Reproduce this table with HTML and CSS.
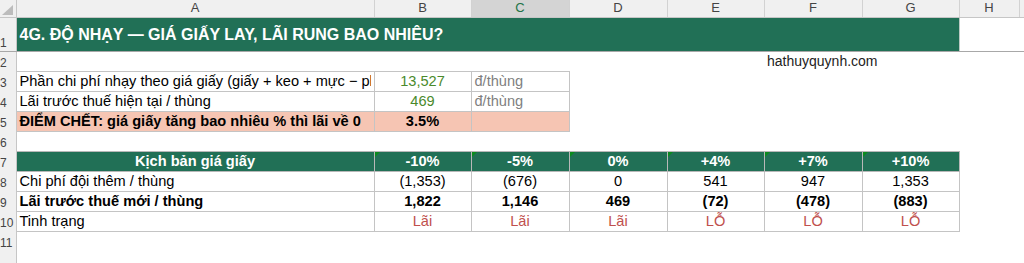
FILE: index.html
```html
<!DOCTYPE html>
<html lang="vi">
<head>
<meta charset="utf-8">
<title>4G. Độ nhạy</title>
<link rel="stylesheet" href="styles.css">
</head>
<body>
<table class="sheet">
  <colgroup>
    <col class="c-rh"><col class="c-a"><col class="c-b"><col class="c-c"><col class="c-d"><col class="c-e"><col class="c-f"><col class="c-g"><col class="c-h"><col class="c-i">
  </colgroup>
  <tr class="hdr">
    <td class="corner"><span class="corner-tri"></span></td>
    <td>A</td><td>B</td><td class="sel">C</td><td>D</td><td>E</td><td>F</td><td>G</td><td>H</td><td></td>
  </tr>
  <tr class="r1">
    <td class="rh">1</td>
    <td class="title" colspan="7">4G. ĐỘ NHẠY — GIÁ GIẤY LAY, LÃI RUNG BAO NHIÊU?</td>
    <td></td><td></td>
  </tr>
  <tr>
    <td class="rh">2</td>
    <td></td><td></td><td></td><td></td><td></td><td class="site">hathuyquynh.com</td><td></td><td></td><td></td>
  </tr>
  <tr>
    <td class="rh">3</td>
    <td class="bx clip"><span class="cut">Phần chi phí nhạy theo giá giấy (giấy + keo + mực − ph</span></td>
    <td class="bx num green">13,527</td>
    <td class="bx unit">đ/thùng</td>
    <td></td><td></td><td></td><td></td><td></td><td></td>
  </tr>
  <tr>
    <td class="rh">4</td>
    <td class="bx">Lãi trước thuế hiện tại / thùng</td>
    <td class="bx num green">469</td>
    <td class="bx unit">đ/thùng</td>
    <td></td><td></td><td></td><td></td><td></td><td></td>
  </tr>
  <tr>
    <td class="rh">5</td>
    <td class="bx hot">ĐIỂM CHẾT: giá giấy tăng bao nhiêu % thì lãi về 0</td>
    <td class="bx hot num">3.5%</td>
    <td class="bx hot"></td>
    <td></td><td></td><td></td><td></td><td></td><td></td>
  </tr>
  <tr>
    <td class="rh">6</td>
    <td></td><td></td><td></td><td></td><td></td><td></td><td></td><td></td><td></td>
  </tr>
  <tr>
    <td class="rh">7</td>
    <td class="kh">Kịch bản giá giấy</td>
    <td class="kh tri">-10%</td>
    <td class="kh tri">-5%</td>
    <td class="kh tri">0%</td>
    <td class="kh tri">+4%</td>
    <td class="kh tri">+7%</td>
    <td class="kh tri">+10%</td>
    <td></td><td></td>
  </tr>
  <tr>
    <td class="rh">8</td>
    <td class="bd lbl">Chi phí đội thêm / thùng</td>
    <td class="bd">(1,353)</td>
    <td class="bd">(676)</td>
    <td class="bd">0</td>
    <td class="bd">541</td>
    <td class="bd">947</td>
    <td class="bd">1,353</td>
    <td></td><td></td>
  </tr>
  <tr class="bold">
    <td class="rh">9</td>
    <td class="bd lbl">Lãi trước thuế mới / thùng</td>
    <td class="bd">1,822</td>
    <td class="bd">1,146</td>
    <td class="bd">469</td>
    <td class="bd">(72)</td>
    <td class="bd">(478)</td>
    <td class="bd">(883)</td>
    <td></td><td></td>
  </tr>
  <tr>
    <td class="rh">10</td>
    <td class="bd lbl">Tinh trạng</td>
    <td class="bd st">Lãi</td>
    <td class="bd st">Lãi</td>
    <td class="bd st">Lãi</td>
    <td class="bd st">LỖ</td>
    <td class="bd st">LỖ</td>
    <td class="bd st">LỖ</td>
    <td></td><td></td>
  </tr>
  <tr>
    <td class="rh">11</td>
    <td></td><td></td><td></td><td></td><td></td><td></td><td></td><td></td><td></td>
  </tr>
  <tr>
    <td class="rh"></td>
    <td></td><td></td><td></td><td></td><td></td><td></td><td></td><td></td><td></td>
  </tr>
</table>
</body>
</html>
```
FILE: styles.css
```css
html, body {
  margin: 0;
  padding: 0;
  background: #ffffff;
  overflow: hidden;
}

body {
  font-family: "Liberation Sans", Arial, sans-serif;
  font-size: 14.6px;
  color: #000000;
}

.sheet {
  border-collapse: collapse;
  table-layout: fixed;
  width: 1024px;
}

.c-rh { width: 16px; }
.c-a { width: 358px; }
.c-b { width: 97px; }
.c-c { width: 98px; }
.c-d { width: 98px; }
.c-e { width: 97px; }
.c-f { width: 98px; }
.c-g { width: 97px; }
.c-h { width: 60px; }
.c-i { width: 5px; }

.sheet td {
  height: 20px;
  padding: 0 3px 1px 3px;
  line-height: 17px;
  vertical-align: bottom;
  white-space: nowrap;
  overflow: visible;
  box-sizing: border-box;
}

/* column header */
.hdr td {
  height: 17px;
  padding: 0;
  line-height: 16px;
  vertical-align: middle;
  background: #f0f0f0;
  border-right: 1px solid #d2d2d2;
  border-bottom: 1px solid #c6c6c6;
  text-align: center;
  font-size: 13px;
  color: #444444;
}

.hdr td.sel {
  background: #d4d4d4;
  color: #217346;
}

.hdr td.corner {
  position: relative;
  border-right: 1px solid #c6c6c6;
}

.corner-tri {
  position: absolute;
  right: 3px;
  bottom: 2px;
  width: 0;
  height: 0;
  border-left: 11px solid transparent;
  border-bottom: 10px solid #bcbcbc;
}

/* row header */
.sheet td.rh {
  background: #f0f0f0;
  border-right: 1px solid #c6c6c6;
  font-size: 12px;
  line-height: 14px;
  color: #444444;
  padding: 0 0 1px 0;
  text-align: left;
  overflow: hidden;
}

/* row 1 */
.r1 td {
  height: 34px;
  border-bottom: 1px solid #a8a8a8;
}

.sheet td.title {
  background: #217056;
  color: #ffffff;
  font-weight: bold;
  font-size: 16px;
  vertical-align: middle;
  padding-bottom: 0;
  border-right: 1px solid #bcc9c3;
}

.site {
  font-size: 14px;
  color: #222222;
}

.bx {
  border: 1px solid #c4c4c4;
}

.sheet td.clip {
  overflow: hidden;
  text-overflow: clip;
}

.cut {
  display: block;
  max-width: 100%;
  overflow: hidden;
  white-space: nowrap;
}

.num {
  text-align: center;
}

.green {
  color: #4a8a2c;
}

.unit {
  color: #7f7f7f;
}

.hot {
  background: #f6c5b3;
  font-weight: bold;
}

.kh {
  background: #217056;
  color: #ffffff;
  font-weight: bold;
  text-align: center;
  border: 1px solid #b8b8b8;
  position: relative;
}

.tri::before {
  content: "";
  position: absolute;
  left: 0;
  top: 0;
  width: 0;
  height: 0;
  border-top: 5px solid #0a8a1e;
  border-right: 5px solid transparent;
}

.bd {
  border: 1px solid #c4c4c4;
  text-align: center;
}

.bd.lbl {
  text-align: left;
}

.bold td {
  font-weight: bold;
}

.bold td.rh {
  font-weight: normal;
}

.st {
  color: #c0504d;
}
```
